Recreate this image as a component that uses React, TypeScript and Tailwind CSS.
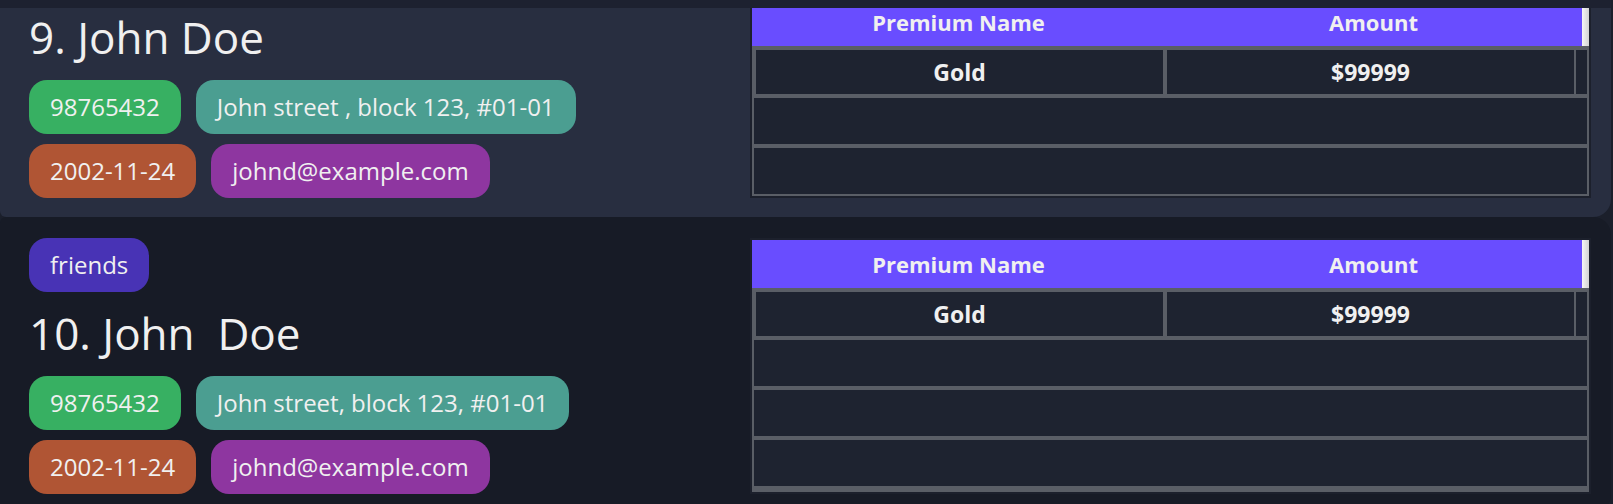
import clsx from 'clsx'

type Premium = { name: string; amount: string }

type Person = {
  index: number
  name: string
  phone: string
  address: string
  birthday: string
  email: string
  tags: string[]
  premiums: Premium[]
}

const PEOPLE: Person[] = [
  {
    index: 9,
    name: 'John Doe',
    phone: '98765432',
    address: 'John street , block 123, #01-01',
    birthday: '2002-11-24',
    email: 'johnd@example.com',
    tags: [],
    premiums: [{ name: 'Gold', amount: '$99999' }]
  },
  {
    index: 10,
    name: 'John  Doe',
    phone: '98765432',
    address: 'John street, block 123, #01-01',
    birthday: '2002-11-24',
    email: 'johnd@example.com',
    tags: ['friends'],
    premiums: [{ name: 'Gold', amount: '$99999' }]
  }
]

function Chip({ text, color }: { text: string; color: string }) {
  return (
    <div
      className={clsx(
        'flex h-[54px] shrink-0 items-center rounded-[18px] px-[21px] text-[24px] leading-[32px] whitespace-pre text-[#f0f0f0]',
        color
      )}
    >
      {text}
    </div>
  )
}

function PremiumTable({ premiums }: { premiums: Premium[] }) {
  return (
    <div className="mr-[20px] flex w-[841px] shrink-0 flex-col border-2 border-[#1c202c]">
      <div className="flex h-[48px] shrink-0 bg-[#694dff] text-[22px] leading-[48px] font-bold text-[#f0f0f0]">
        <div className="w-[413px] text-center">Premium Name</div>
        <div className="w-[417px] text-center">Amount</div>
        <div className="w-[7px] bg-gradient-to-r from-[#f6f6f6] to-[#d2d2d2]" />
      </div>
      <div className="min-h-0 grow basis-[0px] bg-[#5a5e66] px-[2px] pt-[4px] pb-[2px]">
        <div className="flex h-full flex-col gap-[4px] overflow-hidden">
          {premiums.map((p) => (
            <div key={p.name} className="flex h-[44px] shrink-0 text-[23px] font-bold text-[#f0f0f0]">
              <div className="ml-[2px] flex w-[407px] items-center justify-center bg-[#1e2330]">
                {p.name}
              </div>
              <div className="ml-[4px] flex w-[407px] items-center justify-center bg-[#1e2330]">
                {p.amount}
              </div>
              <div className="ml-[2px] flex-1 bg-[#1e2330]" />
            </div>
          ))}
          {[0, 1, 2, 3, 4, 5].map((i) => (
            <div key={i} className="h-[46px] shrink-0 bg-[#1e2330]" />
          ))}
        </div>
      </div>
    </div>
  )
}

function PersonCard({ person, selected }: { person: Person; selected: boolean }) {
  return (
    <div
      className={clsx(
        'flex rounded-l-[6px] rounded-r-[18px] pt-[21px] pb-[19px]',
        selected ? 'bg-[#282e40]' : 'bg-[#171b26]'
      )}
    >
      <div className="flex min-w-0 flex-1 flex-col pl-[29px]">
        <div className="flex gap-[15px]">
          {person.tags.map((t) => (
            <Chip key={t} text={t} color="bg-[#4833b5]" />
          ))}
        </div>
        <div className="mt-[13px] h-[56px] text-[44px] leading-[56px] whitespace-pre text-[#f0f0f0]">
          {person.index}. {person.name}
        </div>
        <div className="mt-[15px] flex gap-[15px]">
          <Chip text={person.phone} color="bg-[#37b062]" />
          <Chip text={person.address} color="bg-[#4b9e91]" />
        </div>
        <div className="mt-[10px] flex gap-[15px]">
          <Chip text={person.birthday} color="bg-[#b05534]" />
          <Chip text={person.email} color="bg-[#8e36a0]" />
        </div>
      </div>
      <PremiumTable premiums={person.premiums} />
    </div>
  )
}

export default function App() {
  return (
    <div className="h-[504px] w-[1613px] overflow-hidden bg-[#1b1f2b] pr-[2px] font-['Open_Sans',sans-serif]">
      <div className="h-[8px] bg-[#1d2130]" />
      {/* list is scrolled a little: card 9 starts above the viewport */}
      <div className="h-[496px] overflow-hidden">
        <div className="-mt-[33px]">
          {PEOPLE.map((p, i) => (
            <PersonCard key={p.index} person={p} selected={i === 0} />
          ))}
        </div>
      </div>
    </div>
  )
}
